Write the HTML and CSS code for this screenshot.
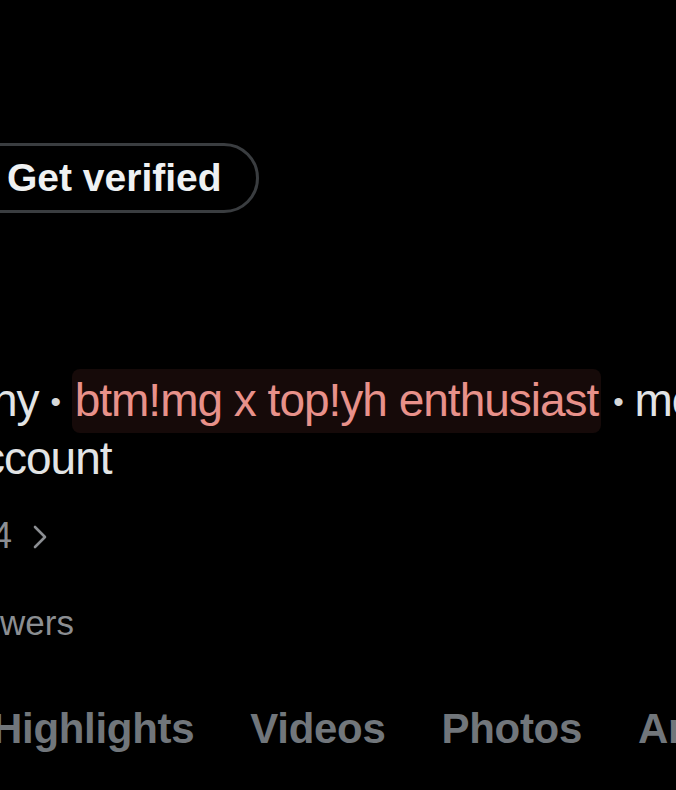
FILE: index.html
```html
<!DOCTYPE html>
<html lang="en">
<head>
    <meta charset="UTF-8">
    <meta name="viewport" content="width=device-width, initial-scale=1.0">
    <title>Profile</title>
    <link rel="stylesheet" href="styles.css">
</head>
<body>
    <div class="profile">
        <!-- Verify button -->
        <div class="actions">
            <button class="verify-btn">Get verified</button>
        </div>

        <!-- Bio -->
        <div class="bio">
            <div class="bio-line">ny <span class="dot">•</span> <span class="tag">btm!mg x top!yh enthusiast</span> <span class="dot">•</span> mod</div>
            <div class="bio-line second">ccount</div>
        </div>

        <div class="meta-link">
            <span class="num">4</span>
            <svg class="chevron" width="16" height="26" viewBox="0 0 16 26">
                <polyline points="3,3 13,13 3,23" fill="none" stroke="#8b8e92" stroke-width="2.6" stroke-linecap="round" stroke-linejoin="round"/>
            </svg>
        </div>

        <div class="stats">wers</div>

        <!-- Tabs -->
        <nav class="tabs">
            <span class="tab">Highlights</span>
            <span class="tab">Videos</span>
            <span class="tab">Photos</span>
            <span class="tab">Articles</span>
        </nav>
    </div>
</body>
</html>
```

FILE: styles.css
```css
body {
    margin: 0;
    padding: 0;
    background: #000;
    color: #e7e9ea;
    font-family: 'Liberation Sans', Arial, sans-serif;
    width: 676px;
    height: 790px;
    overflow: hidden;
}

.profile {
    padding-top: 143px;
}

.actions {
    display: flex;
}

.verify-btn {
    margin-left: -40px;
    height: 70px;
    padding: 0 34px 0 44px;
    border: 3px solid #3a3d40;
    border-radius: 35px;
    background: #000;
    color: #eff1f2;
    font-family: 'Liberation Sans', Arial, sans-serif;
    font-size: 39px;
    font-weight: 700;
    line-height: 64px;
}

.bio {
    margin-top: 159px;
    font-size: 46px;
    letter-spacing: -1px;
    line-height: 57px;
    white-space: nowrap;
    color: #e2e4e5;
}

.bio-line {
    margin-left: -8px;
}

.bio-line.second {
    margin-left: -18px;
}

.dot {
    font-size: 30px;
    vertical-align: 4px;
    color: #d6d8d9;
}

.tag {
    color: #e8918a;
    background: #160a09;
    border-radius: 8px;
    padding: 5px 3px 7px;
}

.meta-link {
    margin-top: 25px;
    display: flex;
    align-items: center;
    gap: 20px;
    height: 48px;
    font-size: 36px;
    line-height: 48px;
    color: #8b8e92;
}

.num {
    margin-left: -8px;
}

.chevron {
    margin-top: 2px;
}

.stats {
    margin-top: 39px;
    font-size: 35px;
    line-height: 48px;
    color: #8b8e92;
}

.tabs {
    margin-top: 54px;
    margin-left: -8px;
    display: flex;
    gap: 56px;
    white-space: nowrap;
}

.tab {
    font-size: 42px;
    font-weight: 700;
    letter-spacing: -0.3px;
    line-height: 56px;
    color: #71767b;
}
```
